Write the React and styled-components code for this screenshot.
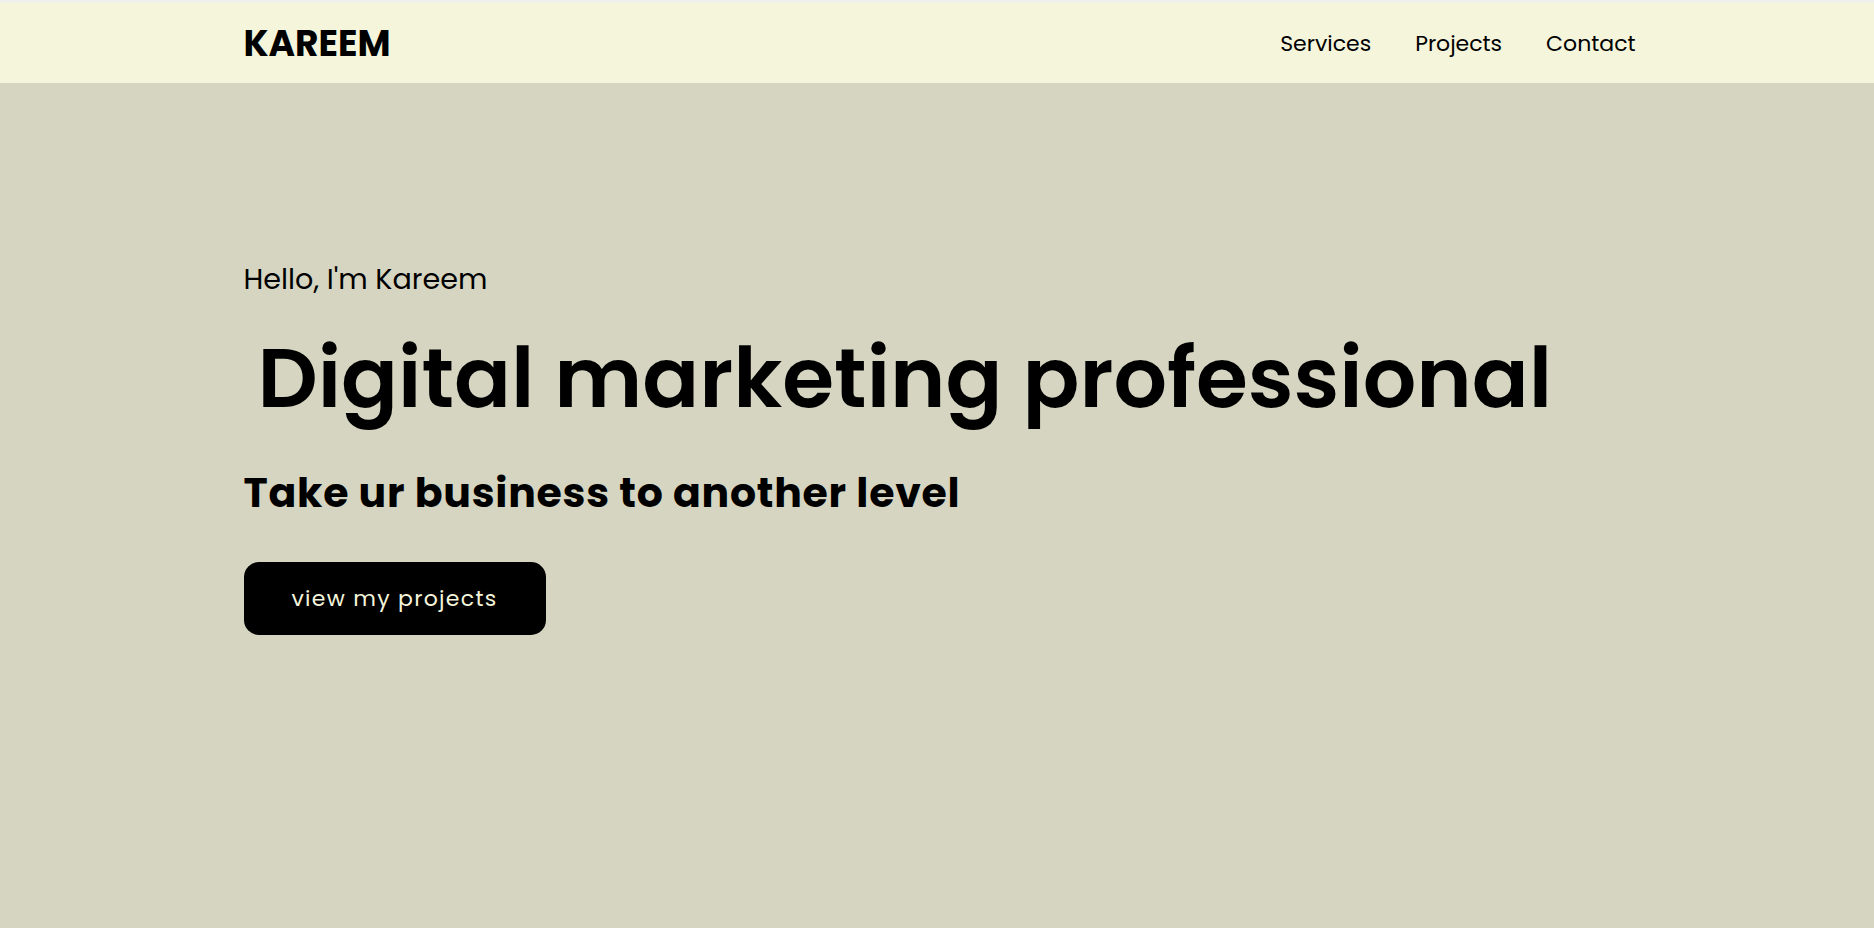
import styled, { createGlobalStyle } from 'styled-components';

const GlobalStyle = createGlobalStyle`
    * {
        box-sizing: border-box;
    }
    body {
        margin: 0;
        background-color: #d6d5c1;
        font-family: 'Poppins', 'Inter', 'Noto Sans', sans-serif;
        color: #000;
    }
`;

const Page = styled.div`
    min-height: 928px;
    display: flex;
    flex-direction: column;
    background-color: #d6d5c1;
`;

const Header = styled.header`
    height: 83px;
    padding-left: 5px;
    background-color: #f5f5dc;
    border-top: 3px solid #efefec;
    display: flex;
    justify-content: center;
`;

const Container = styled.div`
    width: 1392px;
    display: flex;
    align-items: center;
    justify-content: space-between;
`;

const Logo = styled.h2`
    margin: 0;
    font-size: 36px;
    font-weight: 700;
`;

const Nav = styled.nav`
    display: flex;
    gap: 44px;
    & a {
        color: #000;
        text-decoration: none;
        font-size: 22px;
        font-weight: 400;
    }
`;

const Hero = styled.section`
    display: flex;
    justify-content: center;
    padding-top: 175px;
    padding-left: 5px;
`;

const HeroInner = styled.div`
    width: 1392px;
    display: flex;
    flex-direction: column;
    align-items: flex-start;
`;

const Greeting = styled.p`
    margin: 0;
    font-size: 28.6px;
    font-weight: 400;
`;

const Heading = styled.h1`
    margin: 27px 0 0 14px;
    font-size: 84px;
    font-weight: 600;
    line-height: 1.2;
`;

const Tagline = styled.h3`
    margin: 39px 0 0;
    font-size: 41px;
    font-weight: 700;
    letter-spacing: 0.75px;
    line-height: 1.2;
`;

const Button = styled.button`
    margin-top: 45px;
    width: 302px;
    height: 73px;
    border: none;
    border-radius: 15px;
    background-color: #000;
    color: #f5f5dc;
    font-family: inherit;
    font-size: 22px;
    letter-spacing: 1.3px;
    cursor: pointer;
`;

function App() {
    return (
        <>
            <GlobalStyle />
            <Page>
                <Header>
                    <Container>
                        <Logo>KAREEM</Logo>
                        <Nav>
                            <a href="#services">Services</a>
                            <a href="#projects">Projects</a>
                            <a href="#contact">Contact</a>
                        </Nav>
                    </Container>
                </Header>
                <Hero>
                    <HeroInner>
                        <Greeting>Hello, I'm Kareem</Greeting>
                        <Heading>Digital marketing professional</Heading>
                        <Tagline>Take ur business to another level</Tagline>
                        <Button>view my projects</Button>
                    </HeroInner>
                </Hero>
            </Page>
        </>
    );
}

export default App;
